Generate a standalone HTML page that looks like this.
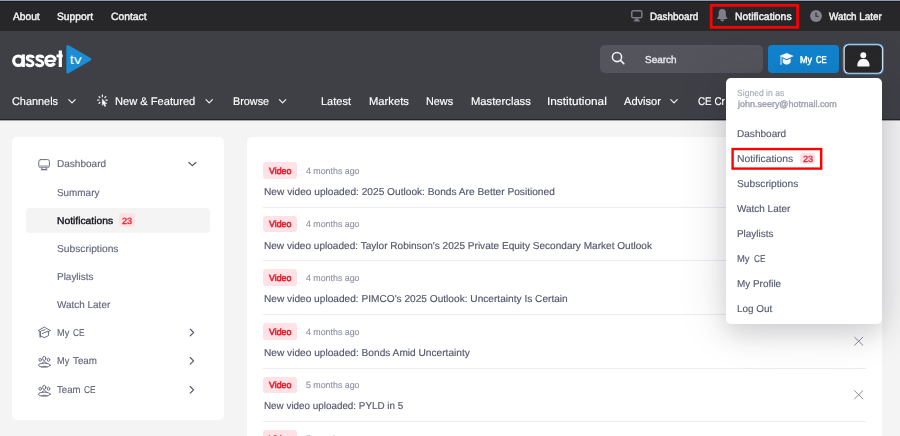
<!DOCTYPE html>
<html><head><meta charset="utf-8">
<style>
*{box-sizing:border-box;margin:0;padding:0}
html,body{width:900px;height:436px;overflow:hidden}
body{font-family:"Liberation Sans",sans-serif;text-rendering:geometricPrecision;background:#f4f4f4;position:relative}
.abs{position:absolute}
.tx{white-space:nowrap;line-height:14px;height:14px;transform-origin:0 50%}
svg{position:absolute;overflow:visible}
</style></head><body>
<!-- bars -->
<div class="abs" style="left:0;top:0;width:900px;height:1px;background:#8d9ab0"></div>
<div class="abs" style="left:0;top:1px;width:900px;height:30px;background:#272729"></div>
<div class="abs" style="left:0;top:1px;width:900px;height:1px;background:#1b1b1d"></div>
<div class="abs" style="left:0;top:31px;width:900px;height:88px;background:#3f4046"></div>
<div class="abs" style="left:0;top:119px;width:900px;height:1px;background:#222228"></div>
<div class="abs" style="left:0;top:120px;width:900px;height:1px;background:#a4a4aa"></div>

<!-- top bar icons -->
<svg style="left:630.8px;top:9.9px" width="11.6" height="11.7" viewBox="0 0 11.6 11.7"><rect x=".75" y=".75" width="10.1" height="7.1" rx="1.7" fill="none" stroke="#7c7c86" stroke-width="1.5"/><path d="M4.3 8.6 L7.3 8.6 L8.1 10.4 L9 10.6 L9 11.6 L2.6 11.6 L2.6 10.6 L3.5 10.4 Z" fill="#7c7c86"/></svg>
<svg style="left:716.8px;top:9.2px" width="10.6" height="12.4" viewBox="0 0 10.6 12.4"><path d="M5.3 0 C2.6 0 1.7 2 1.7 4.2 L1.7 6.2 C1.7 7.6 .9 8.2 .3 8.8 C-.2 9.3 .1 9.9 .8 9.9 L9.8 9.9 C10.5 9.9 10.8 9.3 10.3 8.8 C9.7 8.2 8.9 7.6 8.9 6.2 L8.9 4.2 C8.9 2 8 0 5.3 0 Z" fill="#7e7e88"/><path d="M3.2 10.3 L7.4 10.3 C7.4 11.5 6.4 12.4 5.3 12.4 C4.2 12.4 3.2 11.5 3.2 10.3 Z" fill="#7e7e88"/></svg>
<svg style="left:809.5px;top:9.9px" width="12" height="12" viewBox="0 0 12 12"><circle cx="6" cy="6" r="5.95" fill="#83838d"/><path d="M6 2.6 L6 6.3 L8.6 6.3" fill="none" stroke="#272729" stroke-width="1.1"/></svg>
<svg style="left:0;top:0" width="900" height="32" viewBox="0 0 900 32"><rect x="711.2" y="5.35" width="86.35" height="22" fill="none" stroke="#ff0000" stroke-width="2.7"/></svg>

<!-- logo -->
<svg style="left:0;top:36px" width="120" height="48" viewBox="0 36 120 48">
<g fill="none" stroke="#fff">
<circle cx="18.35" cy="60.7" r="4.7" stroke-width="3.2"/>
<path d="M23.3 54.4 L23.3 67" stroke-width="3.2"/>
<circle cx="50.5" cy="60.7" r="4.7" stroke-width="3.2" stroke-dasharray="25.6 4" stroke-dashoffset="-2.6"/>
<path d="M46.5 60.9 L55.6 60.9" stroke-width="2.3"/>
<path d="M60.3 50.5 L60.3 67" stroke-width="3.2"/>
<path d="M56.5 55.9 L62.7 55.9" stroke-width="2.9"/>
</g>
<g fill="none" stroke="#fff" stroke-width="2.9">
<path d="M33.3 57.9 C32.9 55.5 27.3 55.1 27.2 58 C27.1 60.9 33.1 60.1 33.1 63.5 C33.1 66.6 27 66.4 26.5 63.4"/>
<path transform="translate(9.7 0)" d="M33.3 57.9 C32.9 55.5 27.3 55.1 27.2 58 C27.1 60.9 33.1 60.1 33.1 63.5 C33.1 66.6 27 66.4 26.5 63.4"/>
</g>
<path d="M68.6 45.2 L90.6 57.9 Q92.4 59.2 90.6 60.5 L68.6 73.2 Q66.4 74.2 66.4 71.8 L66.4 46.6 Q66.4 44.2 68.6 45.2 Z" fill="#1a8dd6"/>
<text x="69.8" y="64.3" font-family="Liberation Sans" font-size="13" fill="#fff" textLength="11.8" lengthAdjust="spacingAndGlyphs">tv</text>
</svg>

<!-- search, my ce, user -->
<div class="abs" style="left:599.5px;top:45px;width:163px;height:28.2px;background:#53545c;border-radius:5px"></div>
<svg style="left:0;top:36px" width="900" height="48" viewBox="0 36 900 48"><circle cx="617" cy="57" r="4.6" fill="none" stroke="#f0f0f2" stroke-width="1.55"/><path d="M620.5 60.4 L623.8 63.6" stroke="#f0f0f2" stroke-width="1.6" stroke-linecap="round"/></svg>
<div class="abs" style="left:768.3px;top:45px;width:70.7px;height:28.3px;background:#0f84cf;border-radius:4px"></div>
<svg style="left:780px;top:53.3px" width="13.2" height="11.8" viewBox="0 0 13.2 11.8"><path d="M6.6 0.2 L13.3 3.1 L6.6 6 L-0.1 3.1 Z" fill="#fff" stroke="#fff" stroke-width=".4" stroke-linejoin="round"/><path d="M2.7 5.5 L6.6 7.2 L10.7 5.4 L10.7 9.2 C9.6 10.8 8 11.5 6.6 11.5 C5.2 11.5 3.7 10.8 2.7 9.2 Z" fill="#fff"/><path d="M1 3.8 L1 9.4" stroke="#fff" stroke-width=".9"/><path d="M.1 11.5 L1 8.6 L1.9 11.5 Z" fill="#fff"/></svg>
<svg style="left:0;top:36px" width="900" height="48" viewBox="0 36 900 48">
<rect x="842.8" y="43.4" width="41" height="31.2" rx="5.8" fill="#3f9ce2"/>
<rect x="843.8" y="44.4" width="39" height="29.2" rx="5" fill="#f2f4f7"/>
<rect x="844.7" y="45.3" width="37.2" height="27.4" rx="4.2" fill="#272729"/>
<circle cx="863.3" cy="55.15" r="2.95" fill="#fff"/>
<path d="M858.5 66.6 C857.7 66.6 857.3 66.2 857.3 65.4 C857.3 61.6 859.7 58.7 863.4 58.7 C867.1 58.7 869.5 61.6 869.5 65.4 C869.5 66.2 869.1 66.6 868.3 66.6 Z" fill="#fff"/>
</svg>

<!-- nav icons -->
<svg style="left:0;top:84px" width="900" height="36" viewBox="0 0 900 36" fill="none" stroke="#f4f4f6" stroke-width="1.15" stroke-linecap="round" stroke-linejoin="round">
<path d="M68.8 15.6 L72 18.8 L75.2 15.6"/>
<path d="M206 15.6 L209.2 18.8 L212.4 15.6"/>
<path d="M279.4 15.6 L282.6 18.8 L285.8 15.6"/>
<path d="M670.8 15.6 L674 18.8 L677.2 15.6"/>
<g stroke-width="1.25">
<path d="M102.3 15.3 L102.3 21.3 L103.7 20.1 L104.8 22.5 L105.8 22 L104.7 19.7 L106.5 19.5 Z" fill="#fff" stroke-width=".5"/>
<path d="M102.4 11.2 L102.4 12.5 M99 12.6 L99.9 13.5 M105.8 12.6 L104.9 13.5 M97.6 16 L98.9 16 M107.2 16 L105.9 16 M99.1 19.3 L99.9 18.5"/>
</g>
</svg>

<!-- sidebar -->
<div class="abs" style="left:12.3px;top:137.2px;width:212px;height:282.4px;background:#fff;border-radius:5px"></div>
<div class="abs" style="left:26.4px;top:207.6px;width:183.6px;height:25px;background:#f4f4f4;border-radius:4px"></div>
<div class="abs" style="left:119.3px;top:213.4px;width:15.7px;height:14px;background:#ffe2e5;border-radius:3px"></div>
<svg style="left:0;top:150px" width="230" height="280" viewBox="0 150 230 280" fill="none" stroke="#6c6f84" stroke-width="1" stroke-linecap="round" stroke-linejoin="round">
<!-- monitor -->
<rect x="38.8" y="159.6" width="10.6" height="8" rx="1.8"/>
<path d="M39 165.2 L49.2 165.2 L49.2 166.6 Q49.2 167.4 48 167.4 L40.2 167.4 Q39 167.4 39 166.6 Z" fill="#b4b6c2" stroke="none"/>
<path d="M41.9 167.8 L41.9 169.5 L46.3 169.5 L46.3 167.8 M41.2 169.8 L47 169.8"/>
<!-- chevron down -->
<path d="M188.9 162.5 L192.4 165.6 L195.9 162.5" stroke="#505468" stroke-width="1.2"/>
<!-- grad cap -->
<path d="M38.3 330.5 L44.3 327.1 L50.2 330.5"/>
<path d="M40.3 331.6 L40.3 335.6 L44.2 337.7 L48.6 335.5 L48.6 331.5"/>
<path d="M40.2 332.2 L40.2 337" stroke-width="1.5"/>
<path d="M38.3 330.6 L40.6 331.8 M50.2 330.6 L47.8 331.8"/>
<path d="M42.3 333.5 C44 332.6 46 332.3 47.7 331.3 M41.6 330.7 L45 329.8"/>
<!-- chevrons right -->
<path d="M190.2 329.2 L193.6 332.5 L190.2 335.8" stroke="#505468" stroke-width="1.15"/>
<path d="M190.2 357.5 L193.6 360.8 L190.2 364.1" stroke="#505468" stroke-width="1.15"/>
<path d="M190.2 386.5 L193.6 389.8 L190.2 393.1" stroke="#505468" stroke-width="1.15"/>
<!-- people 1 -->
<g>
<ellipse cx="44.25" cy="358.4" rx="1.6" ry="2.1"/><ellipse cx="40.2" cy="359.8" rx="1.25" ry="1.5"/><ellipse cx="48.5" cy="359.8" rx="1.25" ry="1.5"/>
<ellipse cx="44.3" cy="365.2" rx="5.9" ry="2"/>
<path d="M41.5 363.6 C42 362.3 43.2 361.9 44.3 361.9 C45.4 361.9 46.6 362.3 47.1 363.6 M41.6 366.8 C42.4 366 46.2 366 47 366.8"/>
</g>
<g transform="translate(0 29)">
<ellipse cx="44.25" cy="358.4" rx="1.6" ry="2.1"/><ellipse cx="40.2" cy="359.8" rx="1.25" ry="1.5"/><ellipse cx="48.5" cy="359.8" rx="1.25" ry="1.5"/>
<ellipse cx="44.3" cy="365.2" rx="5.9" ry="2"/>
<path d="M41.5 363.6 C42 362.3 43.2 361.9 44.3 361.9 C45.4 361.9 46.6 362.3 47.1 363.6 M41.6 366.8 C42.4 366 46.2 366 47 366.8"/>
</g>
</svg>

<!-- main card -->
<div class="abs" style="left:246.7px;top:137.2px;width:635.5px;height:320px;background:#fff;border-radius:5px"></div>
<div class="abs" style="left:263.3px;top:162.2px;width:33.8px;height:16.5px;background:#ffe2e5;border-radius:3px"></div>
<div class="abs" style="left:263.3px;top:206.6px;width:602.5px;height:1px;background:#ececf0"></div>
<div class="abs" style="left:263.3px;top:215.8px;width:33.8px;height:16.5px;background:#ffe2e5;border-radius:3px"></div>
<div class="abs" style="left:263.3px;top:260.2px;width:602.5px;height:1px;background:#ececf0"></div>
<div class="abs" style="left:263.3px;top:269.4px;width:33.8px;height:16.5px;background:#ffe2e5;border-radius:3px"></div>
<div class="abs" style="left:263.3px;top:313.8px;width:602.5px;height:1px;background:#ececf0"></div>
<div class="abs" style="left:263.3px;top:323.1px;width:33.8px;height:16.5px;background:#ffe2e5;border-radius:3px"></div>
<div class="abs" style="left:263.3px;top:367.5px;width:602.5px;height:1px;background:#ececf0"></div>
<div class="abs" style="left:263.3px;top:376.7px;width:33.8px;height:16.5px;background:#ffe2e5;border-radius:3px"></div>
<div class="abs" style="left:263.3px;top:421.1px;width:602.5px;height:1px;background:#ececf0"></div>
<div class="abs" style="left:263.3px;top:430.3px;width:33.8px;height:16.5px;background:#ffe2e5;border-radius:3px"></div>
<div class="abs" style="left:263.3px;top:474.7px;width:602.5px;height:1px;background:#ececf0"></div>

<svg style="left:0;top:0" width="900" height="436" viewBox="0 0 900 436" fill="none" stroke="#8a8c9c" stroke-width="1" stroke-linecap="round">
<path d="M854.6 337.2 L862.8 345.2 M862.8 337.2 L854.6 345.2"/>
<path d="M854.6 390.8 L862.8 398.8 M862.8 390.8 L854.6 398.8"/>
</svg>

<!-- dropdown -->
<div class="abs" style="left:726px;top:78.3px;width:156.3px;height:245.6px;background:#fff;border-radius:5px;box-shadow:0 0 50px 0 rgba(60,50,80,.16),0 10px 24px rgba(0,0,0,.13)"></div>
<div class="abs" style="left:800.3px;top:152.8px;width:14.7px;height:11.6px;background:#ffe2e5;border-radius:3px"></div>
<svg style="left:0;top:140px" width="900" height="40" viewBox="0 140 900 40"><rect x="732.6" y="149.05" width="88.6" height="19.55" fill="none" stroke="#ff0000" stroke-width="2.4"/></svg>

<div class="abs" style="left:0;top:0;width:900px;height:436px;will-change:transform">
<div class="abs tx" style="left:12.62px;top:10px;font-size:10.5px;color:#f2f2f4;transform:scaleX(0.9719);-webkit-text-stroke:0.45px #f2f2f4">About</div>
<div class="abs tx" style="left:57.23px;top:10px;font-size:10.5px;color:#f2f2f4;transform:scaleX(0.9808);-webkit-text-stroke:0.45px #f2f2f4">Support</div>
<div class="abs tx" style="left:111.02px;top:10px;font-size:10.5px;color:#f2f2f4;transform:scaleX(0.9857);-webkit-text-stroke:0.45px #f2f2f4">Contact</div>
<div class="abs tx" style="left:650.23px;top:10px;font-size:10.5px;color:#f2f2f4;transform:scaleX(0.9383);-webkit-text-stroke:0.45px #f2f2f4">Dashboard</div>
<div class="abs tx" style="left:735.02px;top:10px;font-size:10.5px;color:#f2f2f4;transform:scaleX(0.9896);-webkit-text-stroke:0.45px #f2f2f4">Notifications</div>
<div class="abs tx" style="left:828.52px;top:10px;font-size:10.5px;color:#f2f2f4;transform:scaleX(0.9388);-webkit-text-stroke:0.45px #f2f2f4">Watch Later</div>
<div class="abs tx" style="left:645.20px;top:54px;font-size:10px;color:#e6e6ea;transform:scaleX(0.9960);-webkit-text-stroke:0.4px #e6e6ea">Search</div>
<div class="abs tx" style="left:799.55px;top:54px;font-size:10px;color:#ffffff;transform:scaleX(0.8927);-webkit-text-stroke:0.5px #ffffff">My</div>
<div class="abs tx" style="left:816.25px;top:54px;font-size:10px;color:#ffffff;transform:scaleX(0.7594);-webkit-text-stroke:0.5px #ffffff">CE</div>
<div class="abs tx" style="left:12.47px;top:95px;font-size:11.2px;color:#ffffff;transform:scaleX(0.9743);-webkit-text-stroke:0.15px #ffffff">Channels</div>
<div class="abs tx" style="left:115.48px;top:95px;font-size:11.2px;color:#ffffff;transform:scaleX(0.9930);-webkit-text-stroke:0.15px #ffffff">New &amp; Featured</div>
<div class="abs tx" style="left:233.07px;top:95px;font-size:11.2px;color:#ffffff;transform:scaleX(0.9668);-webkit-text-stroke:0.15px #ffffff">Browse</div>
<div class="abs tx" style="left:320.68px;top:95px;font-size:11.2px;color:#ffffff;transform:scaleX(0.9835);-webkit-text-stroke:0.15px #ffffff">Latest</div>
<div class="abs tx" style="left:368.68px;top:95px;font-size:11.2px;color:#ffffff;transform:scaleX(1.0015);-webkit-text-stroke:0.15px #ffffff">Markets</div>
<div class="abs tx" style="left:426.07px;top:95px;font-size:11.2px;color:#ffffff;transform:scaleX(0.9672);-webkit-text-stroke:0.15px #ffffff">News</div>
<div class="abs tx" style="left:470.68px;top:95px;font-size:11.2px;color:#ffffff;transform:scaleX(1.0027);-webkit-text-stroke:0.15px #ffffff">Masterclass</div>
<div class="abs tx" style="left:547.02px;top:95px;font-size:11.2px;color:#ffffff;transform:scaleX(1.0570);-webkit-text-stroke:0.15px #ffffff">Institutional</div>
<div class="abs tx" style="left:623.68px;top:95px;font-size:11.2px;color:#ffffff;transform:scaleX(0.9912);-webkit-text-stroke:0.15px #ffffff">Advisor</div>
<div class="abs tx" style="left:698.08px;top:95px;font-size:11.2px;color:#ffffff;transform:scaleX(0.8803);-webkit-text-stroke:0.15px #ffffff">CE Cr</div>
<div class="abs tx" style="left:56.76px;top:158px;font-size:10px;color:#5f6377;transform:scaleX(1.0025);-webkit-text-stroke:0.12px #5f6377">Dashboard</div>
<div class="abs tx" style="left:56.76px;top:187px;font-size:10px;color:#5f6377;transform:scaleX(0.9906);-webkit-text-stroke:0.12px #5f6377">Summary</div>
<div class="abs tx" style="left:56.90px;top:215px;font-size:10px;color:#15161c;transform:scaleX(1.0300);-webkit-text-stroke:0.4px #15161c">Notifications</div>
<div class="abs tx" style="left:56.76px;top:243px;font-size:10px;color:#5f6377;transform:scaleX(1.0242);-webkit-text-stroke:0.12px #5f6377">Subscriptions</div>
<div class="abs tx" style="left:56.76px;top:271px;font-size:10px;color:#5f6377;transform:scaleX(0.9947);-webkit-text-stroke:0.12px #5f6377">Playlists</div>
<div class="abs tx" style="left:56.76px;top:299px;font-size:10px;color:#5f6377;transform:scaleX(0.9939);-webkit-text-stroke:0.12px #5f6377">Watch Later</div>
<div class="abs tx" style="left:56.76px;top:327px;font-size:10px;color:#5f6377;transform:scaleX(0.9212);-webkit-text-stroke:0.12px #5f6377">My</div>
<div class="abs tx" style="left:73.16px;top:327px;font-size:10px;color:#5f6377;transform:scaleX(0.8283);-webkit-text-stroke:0.12px #5f6377">CE</div>
<div class="abs tx" style="left:56.96px;top:355px;font-size:10px;color:#5f6377;transform:scaleX(0.9212);-webkit-text-stroke:0.12px #5f6377">My</div>
<div class="abs tx" style="left:73.36px;top:355px;font-size:10px;color:#5f6377;transform:scaleX(0.9816);-webkit-text-stroke:0.12px #5f6377">Team</div>
<div class="abs tx" style="left:57.26px;top:384px;font-size:10px;color:#5f6377;transform:scaleX(0.9609);-webkit-text-stroke:0.12px #5f6377">Team</div>
<div class="abs tx" style="left:83.96px;top:384px;font-size:10px;color:#5f6377;transform:scaleX(0.8353);-webkit-text-stroke:0.12px #5f6377">CE</div>
<div class="abs tx" style="left:122.05px;top:214px;font-size:9px;color:#e6212f;transform:scaleX(1.0195);-webkit-text-stroke:0.3px #e6212f">23</div>
<div class="abs tx" style="left:269.20px;top:164px;font-size:9px;color:#e6212f;transform:scaleX(0.9759);-webkit-text-stroke:0.6px #e6212f">Video</div>
<div class="abs tx" style="left:306.07px;top:164px;font-size:9px;color:#9092a4;transform:scaleX(0.9802);-webkit-text-stroke:0.15px #9092a4">4 months ago</div>
<div class="abs tx" style="left:263.68px;top:186px;font-size:10px;color:#53566a;transform:scaleX(1.0158);-webkit-text-stroke:0.15px #53566a">New video uploaded: 2025 Outlook: Bonds Are Better Positioned</div>
<div class="abs tx" style="left:269.20px;top:217px;font-size:9px;color:#e6212f;transform:scaleX(0.9759);-webkit-text-stroke:0.6px #e6212f">Video</div>
<div class="abs tx" style="left:306.07px;top:217px;font-size:9px;color:#9092a4;transform:scaleX(0.9802);-webkit-text-stroke:0.15px #9092a4">4 months ago</div>
<div class="abs tx" style="left:263.68px;top:240px;font-size:10px;color:#53566a;transform:scaleX(1.0069);-webkit-text-stroke:0.15px #53566a">New video uploaded: Taylor Robinson's 2025 Private Equity Secondary Market Outlook</div>
<div class="abs tx" style="left:269.20px;top:271px;font-size:9px;color:#e6212f;transform:scaleX(0.9759);-webkit-text-stroke:0.6px #e6212f">Video</div>
<div class="abs tx" style="left:306.07px;top:271px;font-size:9px;color:#9092a4;transform:scaleX(0.9802);-webkit-text-stroke:0.15px #9092a4">4 months ago</div>
<div class="abs tx" style="left:263.68px;top:293px;font-size:10px;color:#53566a;transform:scaleX(1.0130);-webkit-text-stroke:0.15px #53566a">New video uploaded: PIMCO's 2025 Outlook: Uncertainty Is Certain</div>
<div class="abs tx" style="left:269.20px;top:325px;font-size:9px;color:#e6212f;transform:scaleX(0.9759);-webkit-text-stroke:0.6px #e6212f">Video</div>
<div class="abs tx" style="left:306.07px;top:325px;font-size:9px;color:#9092a4;transform:scaleX(0.9802);-webkit-text-stroke:0.15px #9092a4">4 months ago</div>
<div class="abs tx" style="left:263.68px;top:347px;font-size:10px;color:#53566a;transform:scaleX(1.0146);-webkit-text-stroke:0.15px #53566a">New video uploaded: Bonds Amid Uncertainty</div>
<div class="abs tx" style="left:269.20px;top:378px;font-size:9px;color:#e6212f;transform:scaleX(0.9759);-webkit-text-stroke:0.6px #e6212f">Video</div>
<div class="abs tx" style="left:306.07px;top:378px;font-size:9px;color:#9092a4;transform:scaleX(0.9802);-webkit-text-stroke:0.15px #9092a4">5 months ago</div>
<div class="abs tx" style="left:263.68px;top:400px;font-size:10px;color:#53566a;transform:scaleX(0.9860);-webkit-text-stroke:0.15px #53566a">New video uploaded: PYLD in 5</div>
<div class="abs tx" style="left:269.20px;top:432px;font-size:9px;color:#e6212f;transform:scaleX(0.9759);-webkit-text-stroke:0.6px #e6212f">Video</div>
<div class="abs tx" style="left:306.07px;top:432px;font-size:9px;color:#9092a4;transform:scaleX(0.9802);-webkit-text-stroke:0.15px #9092a4">5 months ago</div>
<div class="abs tx" style="left:737.46px;top:86px;font-size:9px;color:#a6a8b6;transform:scaleX(0.9529);-webkit-text-stroke:0.12px #a6a8b6">Signed in as</div>
<div class="abs tx" style="left:737.69px;top:97px;font-size:9px;color:#a0a2b1;transform:scaleX(0.9964);-webkit-text-stroke:0.38px #a0a2b1">john.seery@hotmail.com</div>
<div class="abs tx" style="left:737.38px;top:128px;font-size:10px;color:#565a6e;transform:scaleX(1.0060);-webkit-text-stroke:0.15px #565a6e">Dashboard</div>
<div class="abs tx" style="left:737.38px;top:153px;font-size:10px;color:#565a6e;transform:scaleX(1.0327);-webkit-text-stroke:0.15px #565a6e">Notifications</div>
<div class="abs tx" style="left:737.38px;top:178px;font-size:10px;color:#565a6e;transform:scaleX(1.0220);-webkit-text-stroke:0.15px #565a6e">Subscriptions</div>
<div class="abs tx" style="left:737.38px;top:203px;font-size:10px;color:#565a6e;transform:scaleX(0.9952);-webkit-text-stroke:0.15px #565a6e">Watch Later</div>
<div class="abs tx" style="left:737.38px;top:228px;font-size:10px;color:#565a6e;transform:scaleX(0.9911);-webkit-text-stroke:0.15px #565a6e">Playlists</div>
<div class="abs tx" style="left:737.38px;top:253px;font-size:10px;color:#565a6e;transform:scaleX(0.9415);-webkit-text-stroke:0.15px #565a6e">My</div>
<div class="abs tx" style="left:754.08px;top:253px;font-size:10px;color:#565a6e;transform:scaleX(0.8262);-webkit-text-stroke:0.15px #565a6e">CE</div>
<div class="abs tx" style="left:737.38px;top:278px;font-size:10px;color:#565a6e;transform:scaleX(0.9924);-webkit-text-stroke:0.15px #565a6e">My Profile</div>
<div class="abs tx" style="left:737.38px;top:303px;font-size:10px;color:#565a6e;transform:scaleX(0.9901);-webkit-text-stroke:0.15px #565a6e">Log Out</div>
<div class="abs tx" style="left:802.65px;top:152px;font-size:9px;color:#e6212f;transform:scaleX(1.0195);-webkit-text-stroke:0.3px #e6212f">23</div>

</div>
</body></html>
